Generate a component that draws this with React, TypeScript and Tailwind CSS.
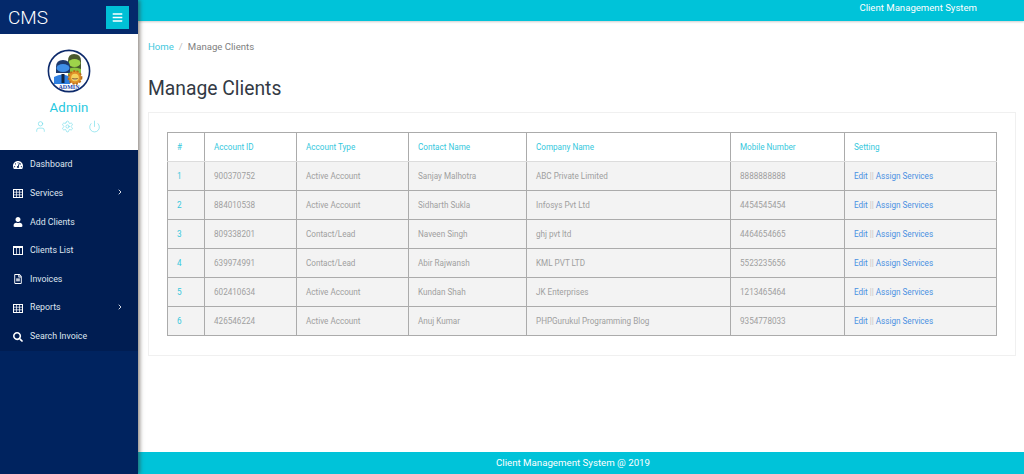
import { User, Settings, Power, ChevronRight } from "lucide-react";
import { FaTachometerAlt, FaUser, FaRegFileAlt, FaSearch, FaBars } from "react-icons/fa";

const rows = [
  ["1", "900370752", "Active Account", "Sanjay Malhotra", "ABC Private Limited", "8888888888"],
  ["2", "884010538", "Active Account", "Sidharth Sukla", "Infosys Pvt Ltd", "4454545454"],
  ["3", "809338201", "Contact/Lead", "Naveen Singh", "ghj pvt ltd", "4464654665"],
  ["4", "639974991", "Contact/Lead", "Abir Rajwansh", "KML PVT LTD", "5523235656"],
  ["5", "602410634", "Active Account", "Kundan Shah", "JK Enterprises", "1213465464"],
  ["6", "426546224", "Active Account", "Anuj Kumar", "PHPGurukul Programming Blog", "9354778033"],
];
const heads = ["#", "Account ID", "Account Type", "Contact Name", "Company Name", "Mobile Number", "Setting"];
const widths = ["w-[37px]", "w-[92px]", "w-[112px]", "w-[118px]", "w-[204px]", "w-[114px]", "w-[152px]"];

function GridIcon() {
  return (
    <svg viewBox="0 0 10 9" className="mr-[7px] h-[9px] w-[10px] shrink-0" fill="#fff">
      <path d="M0 0h10v9H0z M1 1v1.8h2.3V1z M4 1v1.8h2V1z M6.7 1v1.8H9V1z M1 3.6v1.8h2.3V3.6z M4 3.6v1.8h2V3.6z M6.7 3.6v1.8H9V3.6z M1 6.2V8h2.3V6.2z M4 6.2V8h2V6.2z M6.7 6.2V8H9V6.2z" fillRule="evenodd" />
    </svg>
  );
}
function ColumnsIcon() {
  return (
    <svg viewBox="0 0 10 9" className="mr-[7px] h-[9px] w-[10px] shrink-0" fill="#fff">
      <path d="M0 0h10v9H0z M1 2V8h2.3V2z M4 2V8h2V2z M6.7 2V8H9V2z" fillRule="evenodd" />
    </svg>
  );
}
const sized = "mr-[7px] h-[10px] w-[10px] shrink-0 text-white";
const menu = [
  { label: "Dashboard", icon: <FaTachometerAlt className={sized} /> },
  { label: "Services", icon: <GridIcon />, arrow: true },
  { label: "Add Clients", icon: <FaUser className={sized} /> },
  { label: "Clients List", icon: <ColumnsIcon /> },
  { label: "Invoices", icon: <FaRegFileAlt className={sized} /> },
  { label: "Reports", icon: <GridIcon />, arrow: true },
  { label: "Search Invoice", icon: <FaSearch className={sized} /> },
];

function Avatar() {
  return (
    <svg width="44" height="44" viewBox="0 0 44 44" className="block">
      <circle cx="22" cy="22" r="20.6" fill="#fff" stroke="#0d2a6b" strokeWidth="1.6" />
      <path d="M21 12 q0 -7 6 -7 q7 0 7 7 V31 H21z" fill="#4a5a30" />
      <ellipse cx="27.5" cy="14" rx="6" ry="4" fill="#9ed34a" />
      <path d="M21 28 V20 q6.5 -3 13 0 V28z" fill="#8cc63f" />
      <path d="M9 18 q0 -7 7 -7 q7 0 7 7 v6 H9z" fill="#1d3a6e" />
      <ellipse cx="16" cy="19" rx="6.5" ry="4" fill="#3f8fe8" />
      <path d="M7 35 V28 q8.5 -5 16 0 V35z" fill="#2f7fe0" />
      <rect x="14.5" y="25" width="3" height="9" fill="#10233f" />
      <circle cx="28" cy="28.5" r="6.5" fill="#e0902a" stroke="#b8701a" strokeWidth="1.8" strokeDasharray="2 1.5" />
      <circle cx="28" cy="28.5" r="3.8" fill="#f4d35e" />
      <path d="M25.3 29.5 q2.7 2.8 5.4 0z" fill="#fff" stroke="#7a4a10" strokeWidth="0.6" />
      <text x="22" y="39.5" textAnchor="middle" fontSize="6" fontFamily="'Liberation Serif', serif" fontWeight="700" fill="#2146a8">ADMIN</text>
    </svg>
  );
}

export default function App() {
  return (
    <div className="flex h-[474px] w-[1024px] overflow-hidden bg-white font-['Roboto',sans-serif]">
      <aside className="relative z-10 flex h-full w-[138px] shrink-0 flex-col bg-[#00235f] shadow-[2px_0_4px_rgba(60,50,40,0.55)]">
        <div className="flex h-[34px] items-center justify-between bg-[#04296b] pl-[8px] pr-[9px]">
          <span className="text-[19px] font-light leading-none text-white">CMS</span>
          <button className="flex h-[23px] w-[23px] items-center justify-center bg-[#00c0d6] text-white">
            <FaBars className="h-[11px] w-[11px]" />
          </button>
        </div>
        <div className="flex h-[116px] flex-col items-center bg-white pt-[15px]">
          <Avatar />
          <div className="mt-[5px] text-[13.2px] leading-[20px] tracking-[0.2px] text-[#1fc8e0]">Admin</div>
          <div className="mt-[2px] flex items-center gap-[14px] pr-[4px] text-[#6fdcea]">
            <User className="h-[13px] w-[13px]" strokeWidth={1.2} />
            <Settings className="h-[13px] w-[13px]" strokeWidth={1.2} />
            <Power className="h-[13px] w-[13px]" strokeWidth={1.2} />
          </div>
        </div>
        <nav className="flex h-[201px] flex-col bg-[#001d52] pt-[0.5px]">
          {menu.map(({ label, icon, arrow }) => (
            <div key={label} className="flex h-[28.7px] items-center pl-[13px] pr-[14px] text-[8.8px] text-[#dfe5ef]">
              {icon}
              <span className="flex-1">{label}</span>
              {arrow && <ChevronRight className="mb-[3px] h-[8px] w-[8px] text-white" strokeWidth={2.5} />}
            </div>
          ))}
        </nav>
      </aside>

      <main className="flex h-full min-w-0 flex-1 flex-col bg-white">
        <header className="flex h-[21px] shrink-0 items-start justify-end bg-[#00c3d9] pr-[47px] shadow-[0_1px_2px_rgba(0,0,0,0.2)]">
          <span className="pt-[1px] text-[9.6px] leading-[13px] text-white">Client Management System</span>
        </header>
        <div className="flex-1 pl-[10px] pr-[8px]">
          <div className="mt-[19px] flex items-center text-[9.6px] leading-[14px]">
            <span className="text-[#3fc9de]">Home</span>
            <span className="mx-[5px] text-[#bbb]">/</span>
            <span className="text-[#808080]">Manage Clients</span>
          </div>
          <h1 className="mt-[22px] text-[19.3px] font-normal leading-[25px] text-[#333a44]">Manage Clients</h1>
          <div className="mt-[11px] h-[244px] border border-[#f0f0f0] bg-white pl-[18px] pt-[19px]">
            <table className="w-[829px] table-fixed border-collapse border border-[#6e6e6e] text-[8.15px]">
              <thead>
                <tr className="h-[29px] bg-white">
                  {heads.map((h, i) => (
                    <th key={h} className={`${widths[i]} border border-[#ababab] border-b-[#dcdcdc] px-[9px] text-left font-normal text-[#35c8dd]`}>{h}</th>
                  ))}
                </tr>
              </thead>
              <tbody>
                {rows.map((r) => (
                  <tr key={r[0]} className="h-[29px] bg-[#f3f3f3]">
                    {r.map((c, i) => (
                      <td key={i} className={`border border-[#ababab] px-[9px] pt-[1px] ${i === 0 ? "text-[#35c8dd]" : "text-[#a0a0a0]"}`}>{c}</td>
                    ))}
                    <td className="border border-[#ababab] px-[9px] pt-[1px] text-[#4a90e2]">
                      Edit <span className="text-[#c4c4c4]">||</span> Assign Services
                    </td>
                  </tr>
                ))}
              </tbody>
            </table>
          </div>
        </div>
        <footer className="flex h-[22px] shrink-0 items-center justify-center bg-[#00c3d9] pr-[16px] text-[9.7px] text-white">
          Client Management System @ 2019
        </footer>
      </main>
    </div>
  );
}
